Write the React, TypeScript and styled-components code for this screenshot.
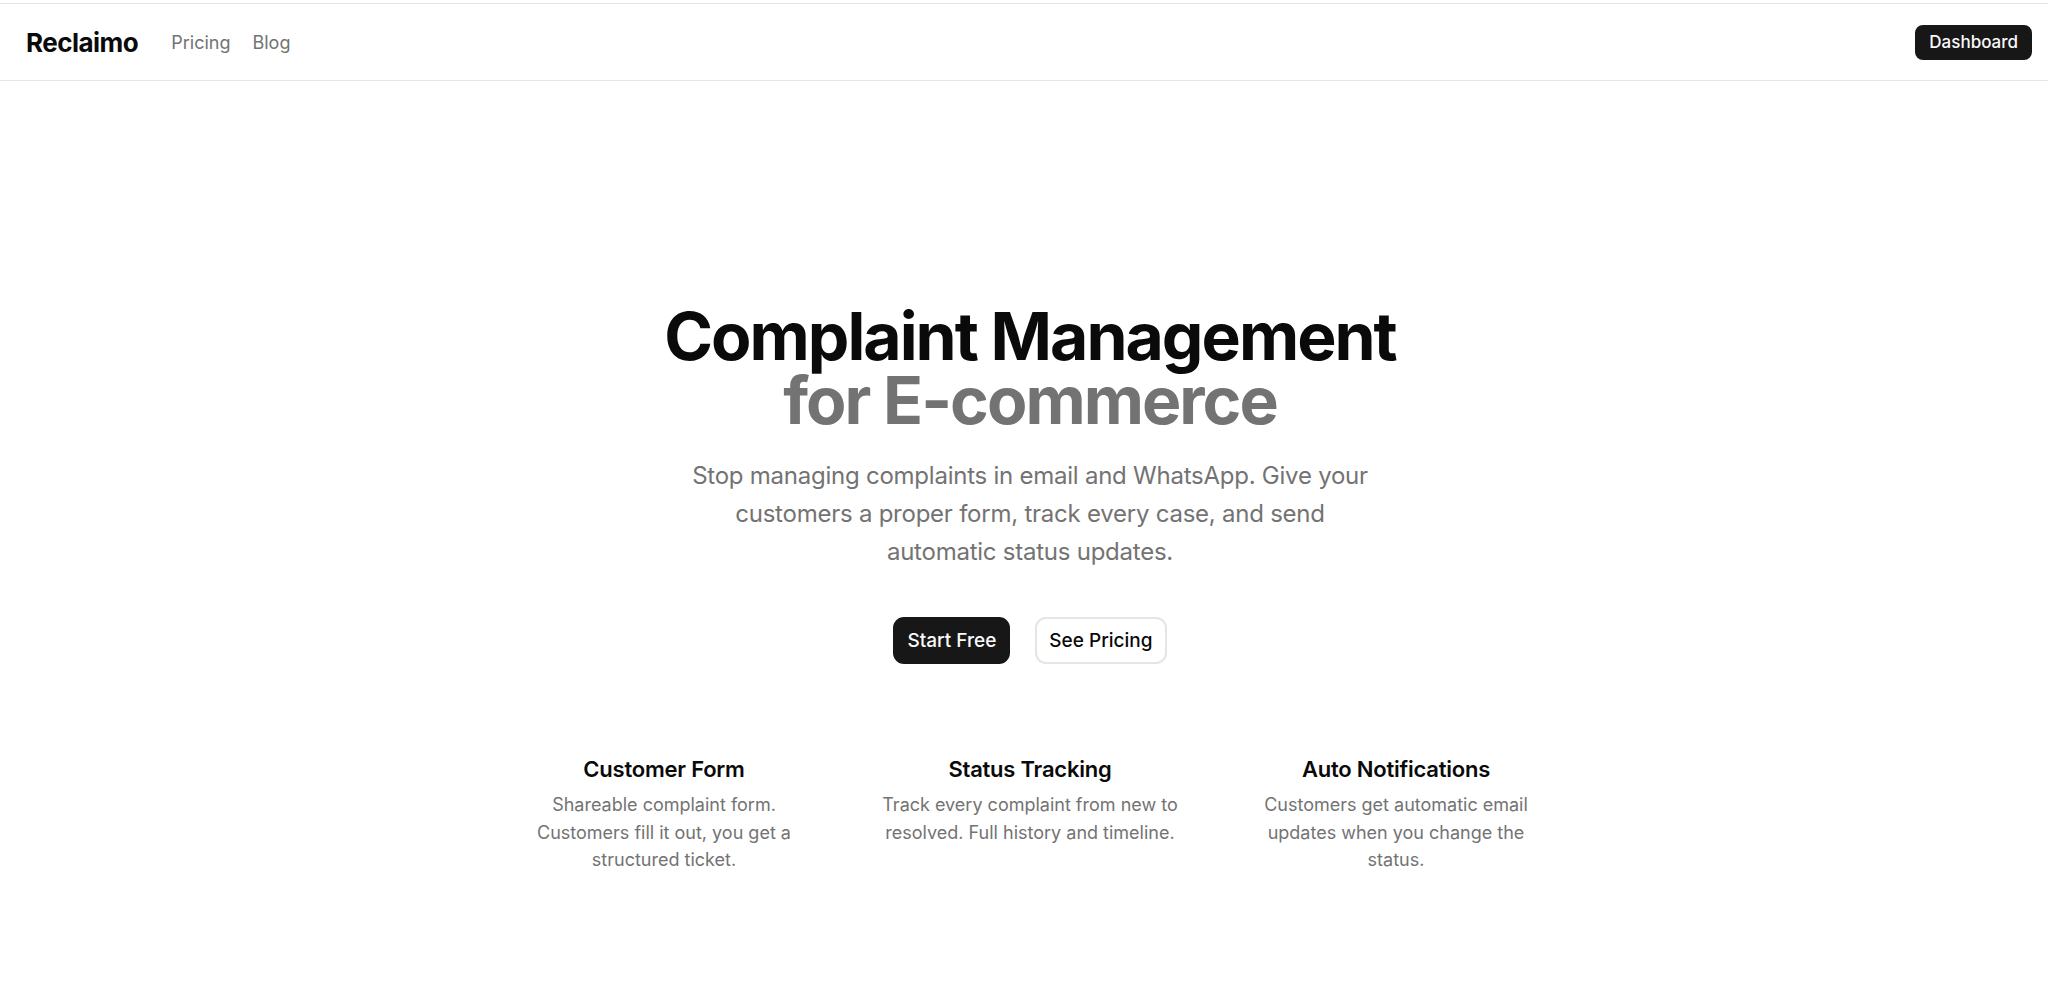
import styled, { createGlobalStyle } from 'styled-components'

const GlobalStyle = createGlobalStyle`
  html, body {
    margin: 0;
    padding: 0;
    background: #ffffff;
  }
  body {
    font-family: Inter, "Noto Sans", "Liberation Sans", sans-serif;
    color: #0a0a0a;
    -webkit-font-smoothing: antialiased;
  }
  * {
    box-sizing: border-box;
  }
`

const Page = styled.div`
  min-height: 100vh;
  padding-top: 3px;
`

const Header = styled.header`
  height: 78px;
  border-top: 1px solid #e5e5e5;
  border-bottom: 1px solid #e5e5e5;
  display: flex;
  align-items: center;
  justify-content: space-between;
  padding: 0 16px 0 26px;
`

const Left = styled.div`
  display: flex;
  align-items: center;
  gap: 33px;
`

const Logo = styled.a`
  font-size: 26px;
  font-weight: 700;
  letter-spacing: -0.02em;
  color: #0a0a0a;
  text-decoration: none;
`

const Nav = styled.nav`
  display: flex;
  align-items: center;
  gap: 22px;
`

const NavLink = styled.a`
  font-size: 18px;
  color: #737373;
  text-decoration: none;
`

const Button = styled.a<{ $variant?: 'dark' | 'outline'; $size?: 'sm' | 'md' }>`
  display: inline-flex;
  align-items: center;
  justify-content: center;
  text-decoration: none;
  font-weight: 500;
  font-size: ${({ $size }) => ($size === 'sm' ? '17px' : '19px')};
  height: ${({ $size }) => ($size === 'sm' ? '35px' : '47px')};
  padding: ${({ $size }) => ($size === 'sm' ? '0 12px' : '0 12px')};
  border-radius: ${({ $size }) => ($size === 'sm' ? '8px' : '11px')};
  background: ${({ $variant }) => ($variant === 'outline' ? '#ffffff' : '#171717')};
  color: ${({ $variant }) => ($variant === 'outline' ? '#0a0a0a' : '#fafafa')};
  border: 2px solid ${({ $variant }) => ($variant === 'outline' ? '#e5e5e5' : '#171717')};
`

const Hero = styled.main`
  display: flex;
  flex-direction: column;
  align-items: center;
  padding: 223px 18px 80px 30px;
  text-align: center;
`

const Title = styled.h1`
  margin: 0;
  font-size: 66px;
  line-height: 64px;
  font-weight: 700;
  letter-spacing: -0.03em;
  color: #0a0a0a;
`

const Muted = styled.span`
  display: block;
  color: #737373;
`

const Lead = styled.p`
  margin: 25px 0 0;
  max-width: 700px;
  font-size: 24px;
  line-height: 38px;
  color: #737373;
  letter-spacing: -0.01em;
`

const Actions = styled.div`
  display: flex;
  gap: 25px;
  margin-top: 46px;
`

const Features = styled.section`
  display: grid;
  grid-template-columns: repeat(3, 318px);
  column-gap: 48px;
  margin-top: 90px;
`

const Feature = styled.div`
  display: flex;
  flex-direction: column;
  align-items: center;
  gap: 7px;
`

const FeatureTitle = styled.h3`
  margin: 0;
  font-size: 22px;
  line-height: 30px;
  font-weight: 600;
  letter-spacing: -0.01em;
  color: #0a0a0a;
`

const FeatureText = styled.p`
  margin: 0;
  font-size: 18px;
  line-height: 27.5px;
  color: #737373;
`

const features = [
  {
    title: 'Customer Form',
    text: 'Shareable complaint form. Customers fill it out, you get a structured ticket.',
  },
  {
    title: 'Status Tracking',
    text: 'Track every complaint from new to resolved. Full history and timeline.',
  },
  {
    title: 'Auto Notifications',
    text: 'Customers get automatic email updates when you change the status.',
  },
]

function App() {
  return (
    <>
      <GlobalStyle />
      <Page>
        <Header>
          <Left>
            <Logo href="#">Reclaimo</Logo>
            <Nav>
              <NavLink href="#">Pricing</NavLink>
              <NavLink href="#">Blog</NavLink>
            </Nav>
          </Left>
          <Button $size="sm" href="#">
            Dashboard
          </Button>
        </Header>
        <Hero>
          <Title>
            Complaint Management
            <Muted>for E-commerce</Muted>
          </Title>
          <Lead>
            Stop managing complaints in email and WhatsApp. Give your customers a proper form,
            track every case, and send automatic status updates.
          </Lead>
          <Actions>
            <Button href="#">Start Free</Button>
            <Button $variant="outline" href="#">
              See Pricing
            </Button>
          </Actions>
          <Features>
            {features.map((f) => (
              <Feature key={f.title}>
                <FeatureTitle>{f.title}</FeatureTitle>
                <FeatureText>{f.text}</FeatureText>
              </Feature>
            ))}
          </Features>
        </Hero>
      </Page>
    </>
  )
}

export default App
